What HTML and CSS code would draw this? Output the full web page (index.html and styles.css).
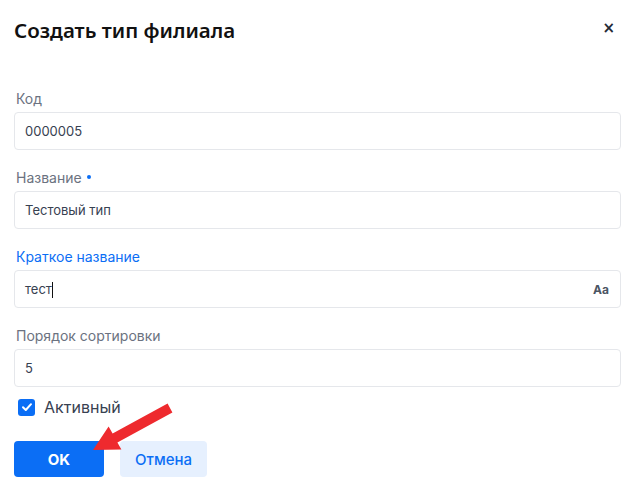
FILE: index.html
```html
<!DOCTYPE html>
<html lang="ru">
<head>
  <meta charset="UTF-8" />
  <title>Создать тип филиала</title>
  <link rel="stylesheet" href="styles.css">
</head>
<body>
  <div class="dialog">
    <div class="dialog-header">
      <h2 class="dialog-title">Создать тип филиала</h2>
      <span class="close-btn">×</span>
    </div>

    <div class="form">
      <div class="field">
        <label class="field-label">Код</label>
        <div class="field-input">0000005</div>
      </div>
      <div class="field">
        <label class="field-label">Название <span class="required-dot"></span></label>
        <div class="field-input">Тестовый тип</div>
      </div>
      <div class="field">
        <label class="field-label field-label-active">Краткое название</label>
        <div class="field-input">
          <span>тест<span class="caret"></span></span>
          <span class="case-icon">Aa</span>
        </div>
      </div>
      <div class="field">
        <label class="field-label">Порядок сортировки</label>
        <div class="field-input">5</div>
      </div>

      <div class="check-row">
        <span class="checkbox">
          <svg width="12" height="12" viewBox="0 0 12 12"><path d="M2 6.2 L4.8 9 L10 3.2" fill="none" stroke="#fff" stroke-width="2" stroke-linecap="round" stroke-linejoin="round"/></svg>
        </span>
        <span class="check-label">Активный</span>
      </div>

      <div class="button-row">
        <button class="btn btn-primary">OK</button>
        <button class="btn btn-secondary">Отмена</button>
      </div>
    </div>

    <svg class="pointer-arrow" width="631" height="493" viewBox="0 0 631 493">
      <polygon points="167.6,403.6 172.4,412.4 117.4,442.4 121.4,449.6 93,450 108.6,426.4 112.6,433.6" fill="#ee2a2e"/>
    </svg>
  </div>
</body>
</html>
```

FILE: styles.css
```css
body { margin: 0; background: #fff; font-family: Inter, "Noto Sans", sans-serif; }
.dialog { position: relative; width: 631px; height: 493px; padding: 16px 10px 0 14px; box-sizing: border-box; }
.dialog-header { display: flex; align-items: center; justify-content: space-between; height: 28px; }
.dialog-title { margin: 0; font-family: "Noto Sans", sans-serif; font-size: 20.5px; font-weight: 600; color: #111; }
.close-btn { font-family: "DejaVu Sans", sans-serif; font-size: 15px; font-weight: bold; color: #1f2937; margin-right: 6px; margin-top: -4px; }
.form { margin-top: 44px; width: 607px; }
.field { margin-bottom: 17px; }
.field-label { display: flex; align-items: center; gap: 5px; height: 20px; padding-left: 2px; margin-bottom: 4px; font-size: 14px; color: #6b7280; }
.field-label-active { color: #0b6ef5; }
.required-dot { width: 4px; height: 4px; border-radius: 50%; background: #0b6ef5; }
.field-input { display: flex; align-items: center; justify-content: space-between; height: 38px; box-sizing: border-box; padding: 0 11px 0 10px; border: 1px solid #e5e7eb; border-radius: 4px; font-size: 13px; color: #374151; }
.caret { display: inline-block; width: 1px; height: 16px; background: #111; vertical-align: -4px; }
.case-icon { font-size: 12px; font-weight: 700; color: #4b5563; }
.check-row { display: flex; align-items: center; gap: 9px; height: 20px; margin-top: -7px; padding-left: 4px; }
.checkbox { display: flex; align-items: center; justify-content: center; width: 17px; height: 17px; border-radius: 3px; background: #0b6ef5; }
.check-label { font-size: 16px; color: #374151; }
.button-row { display: flex; gap: 16px; margin-top: 24px; }
.btn { height: 36px; border: none; border-radius: 4px; font-family: Inter, sans-serif; font-size: 15px; cursor: pointer; }
.btn-primary { width: 90px; background: #0b6ef5; color: #fff; font-weight: 700; }
.btn-secondary { width: 87px; background: #e6f0fe; color: #0b6ef5; font-weight: 500; }
.pointer-arrow { position: absolute; left: 0; top: 0; pointer-events: none; }
```
